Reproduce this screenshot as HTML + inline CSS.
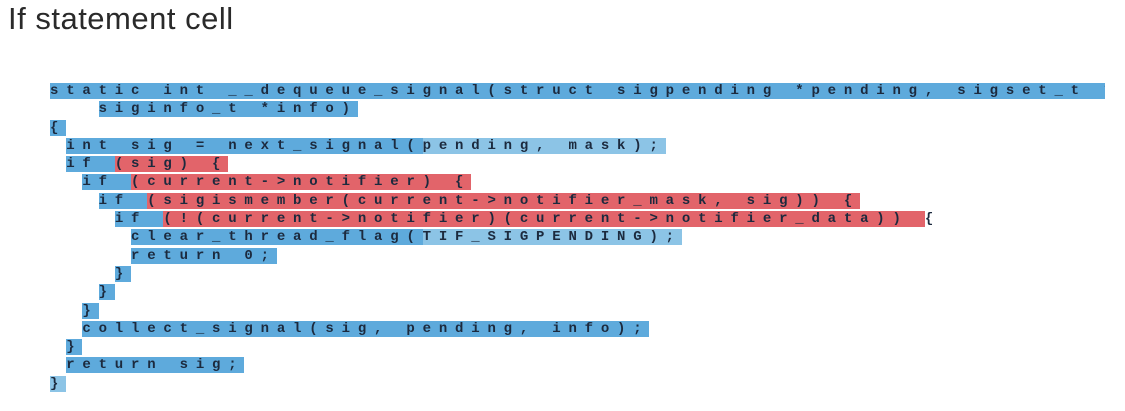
<!DOCTYPE html>
<html><head><meta charset="utf-8"><style>
body{margin:0;width:1125px;height:411px;background:#fff;overflow:hidden;position:relative;font-family:"Liberation Sans",sans-serif}
.t{position:absolute;left:8px;top:1px;font-size:31px;letter-spacing:0.5px;color:#2a2a2a}
.c{position:absolute;left:50px;top:82px;width:1055px;overflow:hidden}
.l{height:18.3px;line-height:18.3px;white-space:pre;font-family:"Liberation Mono",monospace;font-weight:bold;font-size:14px;letter-spacing:7.8px;color:#1c2a3e}
.b{background:#5eaadc}
.r{background:#e2646a}
.lb{background:#8cc4e6}
</style></head><body>
<div class="t">If statement cell</div>
<div class="c">
<div class="l"><span class="b">static int __dequeue_signal(struct sigpending *pending, sigset_t *ma</span></div>
<div class="l">   <span class="b">siginfo_t *info)</span></div>
<div class="l"><span class="b">{</span></div>
<div class="l"> <span class="b">int sig = next_signal(</span><span class="lb">pending, mask);</span></div>
<div class="l"> <span class="b">if </span><span class="r">(sig) {</span></div>
<div class="l">  <span class="b">if </span><span class="r">(current-&gt;notifier) {</span></div>
<div class="l">   <span class="b">if </span><span class="r">(sigismember(current-&gt;notifier_mask, sig)) {</span></div>
<div class="l">    <span class="b">if </span><span class="r">(!(current-&gt;notifier)(current-&gt;notifier_data)) </span>{</div>
<div class="l">     <span class="b">clear_thread_flag(</span><span class="lb">TIF_SIGPENDING);</span></div>
<div class="l">     <span class="b">return 0;</span></div>
<div class="l">    <span class="b">}</span></div>
<div class="l">   <span class="b">}</span></div>
<div class="l">  <span class="b">}</span></div>
<div class="l">  <span class="b">collect_signal(sig, pending, info);</span></div>
<div class="l"> <span class="b">}</span></div>
<div class="l"> <span class="b">return sig;</span></div>
<div class="l"><span class="lb">}</span></div>
</div>
</body></html>
